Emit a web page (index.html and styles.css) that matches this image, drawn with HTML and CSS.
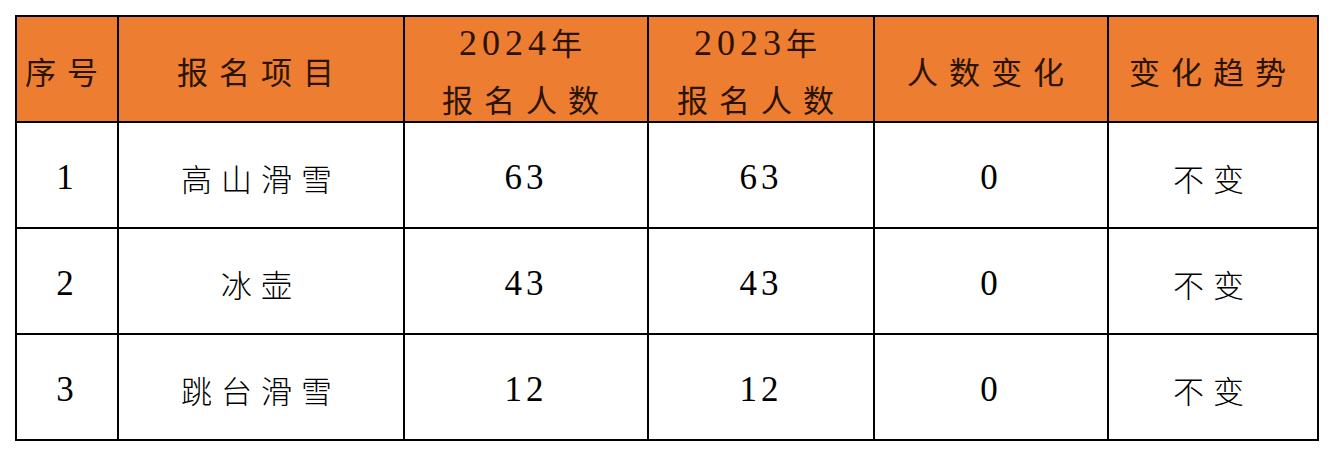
FILE: index.html
```html
<!DOCTYPE html>
<html lang="zh-CN">
<head>
<meta charset="utf-8">
<title>报名人数</title>
<link rel="stylesheet" href="styles.css">
</head>
<body>
<div class="page">
  <div class="table">
    <div class="cell head"><span class="cjk">序号</span></div>
    <div class="cell head"><span class="cjk">报名项目</span></div>
    <div class="cell head two"><span class="line"><span class="num">2024</span><span class="cjk">年</span></span><span class="line cjk">报名人数</span></div>
    <div class="cell head two"><span class="line"><span class="num">2023</span><span class="cjk">年</span></span><span class="line cjk">报名人数</span></div>
    <div class="cell head"><span class="cjk">人数变化</span></div>
    <div class="cell head"><span class="cjk">变化趋势</span></div>

    <div class="cell"><span class="num">1</span></div>
    <div class="cell"><span class="cjk">高山滑雪</span></div>
    <div class="cell"><span class="num">63</span></div>
    <div class="cell"><span class="num">63</span></div>
    <div class="cell"><span class="num">0</span></div>
    <div class="cell"><span class="cjk">不变</span></div>

    <div class="cell"><span class="num">2</span></div>
    <div class="cell"><span class="cjk">冰壶</span></div>
    <div class="cell"><span class="num">43</span></div>
    <div class="cell"><span class="num">43</span></div>
    <div class="cell"><span class="num">0</span></div>
    <div class="cell"><span class="cjk">不变</span></div>

    <div class="cell"><span class="num">3</span></div>
    <div class="cell"><span class="cjk">跳台滑雪</span></div>
    <div class="cell"><span class="num">12</span></div>
    <div class="cell"><span class="num">12</span></div>
    <div class="cell"><span class="num">0</span></div>
    <div class="cell"><span class="cjk">不变</span></div>
  </div>
</div>
</body>
</html>
```

FILE: styles.css
```css
html, body {
  margin: 0;
  padding: 0;
  background: #ffffff;
}

.page {
  padding: 15px 0 0 15px;
}

.table {
  display: grid;
  grid-template-columns: 100px 284px 242px 224px 232px 208px;
  grid-template-rows: 104px 104px 104px 104px;
  gap: 2px;
  padding: 2px;
  background: #000000;
  width: max-content;
}

.cell {
  background: #ffffff;
  color: #000000;
  display: flex;
  flex-direction: column;
  align-items: center;
  justify-content: center;
  padding-top: 5px;
  font-family: "Liberation Serif", "Noto Sans CJK SC", serif;
  line-height: 49px;
}

.cell.head {
  background: #ED7D31;
  color: #2a1300;
  padding-top: 2px;
}

.cjk {
  font-family: "Noto Sans CJK SC", "Liberation Serif", sans-serif;
  font-size: 31px;
  font-weight: 300;
  letter-spacing: 9px;
}

.head .cjk {
  font-weight: 400;
  letter-spacing: 11px;
}

.num {
  font-family: "Liberation Serif", serif;
  font-size: 35px;
  letter-spacing: 4px;
}

.head .num {
  font-size: 36px;
  letter-spacing: 5px;
}

.line {
  display: block;
  white-space: nowrap;
}
```
